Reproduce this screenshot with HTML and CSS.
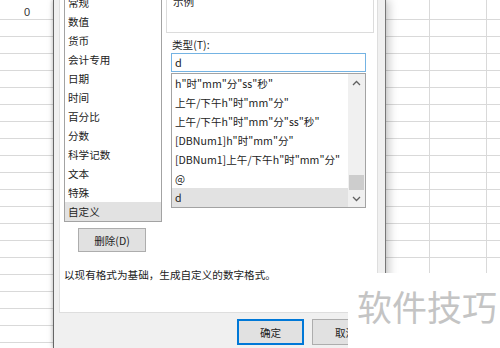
FILE: index.html
```html
<!DOCTYPE html>
<html lang="zh-CN">
<head>
<meta charset="utf-8">
<title>设置单元格格式</title>
<link rel="stylesheet" href="styles.css">
</head>
<body>
<div class="screen">
  <div class="sheet sheet-left"><div class="cell-zero">0</div></div>
  <div class="dialog">
    <div class="panel">
      <div class="panel-top">
        <div class="cat-col">
          <ul class="cat-list">
            <li>常规</li>
            <li>数值</li>
            <li>货币</li>
            <li>会计专用</li>
            <li>日期</li>
            <li>时间</li>
            <li>百分比</li>
            <li>分数</li>
            <li>科学记数</li>
            <li>文本</li>
            <li>特殊</li>
            <li class="sel">自定义</li>
          </ul>
          <button class="btn btn-del">删除(D)</button>
        </div>
        <div class="fmt-col">
          <div class="sample">示例</div>
          <div class="type-label">类型(T):</div>
          <div class="type-input">d</div>
          <div class="type-list">
            <ul class="type-items">
              <li>h"时"mm"分"ss"秒"</li>
              <li>上午/下午h"时"mm"分"</li>
              <li>上午/下午h"时"mm"分"ss"秒"</li>
              <li>[DBNum1]h"时"mm"分"</li>
              <li>[DBNum1]上午/下午h"时"mm"分"</li>
              <li>@</li>
              <li class="sel">d</li>
            </ul>
            <div class="scrollbar">
              <div class="sb-btn"><svg width="9" height="6" viewBox="0 0 9 6"><polyline points="1,5 4.5,1.5 8,5" fill="none" stroke="#606060" stroke-width="1.3"/></svg></div>
              <div class="sb-track"><div class="sb-thumb"></div></div>
              <div class="sb-btn"><svg width="9" height="6" viewBox="0 0 9 6"><polyline points="1,1 4.5,4.5 8,1" fill="none" stroke="#606060" stroke-width="1.3"/></svg></div>
            </div>
          </div>
        </div>
      </div>
      <p class="desc">以现有格式为基础，生成自定义的数字格式。</p>
    </div>
    <div class="footer">
      <button class="btn btn-ok">确定</button>
      <button class="btn">取消</button>
    </div>
  </div>
  <div class="sheet sheet-right"></div>
  <div class="watermark">软件技巧</div>
</div>
</body>
</html>
```
FILE: styles.css
```css
* { box-sizing: border-box; }
html, body { margin: 0; padding: 0; background: #fff; }
body {
  font-family: "Noto Sans CJK SC", "Microsoft YaHei", sans-serif;
  font-size: 10.6px;
  color: #222;
}
ul { list-style: none; margin: 0; padding: 0; }

.screen {
  position: relative;
  width: 500px;
  height: 348px;
  overflow: hidden;
  display: flex;
}

/* spreadsheet background */
.sheet {
  flex: none;
  height: 348px;
  background-color: #fff;
  background-image:
    repeating-linear-gradient(to bottom, transparent 0 16px, #d9d9d9 16px 17px),
    repeating-linear-gradient(to right, transparent 0 56px, #d9d9d9 56px 57px);
}
.sheet-left {
  width: 53px;
  background-position: 0 3px, -23px 0;
}
.sheet-right {
  flex: 1;
  background-position: 0 3px, -13px 0;
}
.cell-zero {
  font-family: "Liberation Sans", Arial, sans-serif;
  font-size: 11px;
  line-height: 14px;
  text-align: right;
  padding: 5px 23px 0 0;
  color: #333;
}

/* dialog */
.dialog {
  position: relative;
  z-index: 1;
  flex: none;
  width: 333px;
  height: 348px;
  background: #f0f0f0;
  border-left: 1px solid #666;
  border-right: 1px solid #777;
  box-shadow: 3px 0 9px rgba(0,0,0,0.22), -1px 0 3px rgba(0,0,0,0.15);
  display: flex;
  flex-direction: column;
}
.panel {
  flex: none;
  margin: -30px 7px 0 5px;
  height: 343px;
  background: #fff;
  border: 1px solid #dedede;
}
.panel-top {
  display: flex;
  gap: 4px;
  padding-left: 4px;
}

.cat-col {
  width: 98px;
  flex: none;
  display: flex;
  flex-direction: column;
  align-items: flex-start;
}
.cat-list {
  width: 98px;
  margin-top: 22px;
  border: 1px solid #a3a3a3;
  border-top: none;
}
.cat-list li, .type-items li {
  height: 19px;
  line-height: 19px;
  padding-left: 3px;
  white-space: nowrap;
}
.cat-list li.sel, .type-items li.sel { background: #e2e2e2; }

.btn {
  font: inherit;
  color: #222;
  background: #e1e1e1;
  border: 1px solid #adadad;
  padding: 0;
  margin: 0;
}
.btn-del {
  margin: 6px 0 0 14px;
  width: 68px;
  height: 24px;
}

.fmt-col {
  width: 208px;
  flex: none;
}
.sample {
  margin-top: 8px;
  height: 54px;
  border: 1px solid #dcdcdc;
  padding: 12px 0 0 6px;
  line-height: 19px;
}
.type-label {
  margin: 5px 0 0 6px;
  line-height: 14px;
}
.type-input {
  margin: 1px 0 0 5px;
  width: 195px;
  height: 19px;
  border: 1px solid #74b3e3;
  line-height: 17px;
  padding-left: 3px;
  font-size: 11px;
}
.type-list {
  margin: 1px 0 0 5px;
  width: 195px;
  height: 135px;
  border: 1px solid #a3a3a3;
  display: flex;
}
.type-items {
  width: 176px;
  flex: none;
}
.scrollbar {
  flex: 1;
  background: #f0f0f0;
  display: flex;
  flex-direction: column;
}
.sb-btn {
  height: 17px;
  display: flex;
  align-items: center;
  justify-content: center;
}
.sb-track {
  flex: 1;
  display: flex;
  flex-direction: column;
  justify-content: flex-end;
}
.sb-thumb {
  height: 15px;
  margin: 0 1px 0 1px;
  background: #cdcdcd;
}

.desc {
  margin: 16px 0 0 4px;
  line-height: 14px;
}

.footer {
  flex: 1;
  display: flex;
  justify-content: flex-end;
  align-items: flex-start;
  gap: 8px;
  padding: 6px 6px 0 0;
}
.footer .btn {
  width: 67px;
  height: 26px;
}
.btn-ok {
  border: 1px solid #0078d7;
  box-shadow: inset 0 0 0 1px #0078d7;
}

/* watermark overlay */
.watermark {
  position: absolute;
  z-index: 2;
  left: 348px;
  top: 273px;
  right: 0;
  bottom: 0;
  background: #fff;
  color: #c4c4c4;
  font-size: 35px;
  line-height: 40px;
  padding: 13px 0 0 9px;
  white-space: nowrap;
}
```
